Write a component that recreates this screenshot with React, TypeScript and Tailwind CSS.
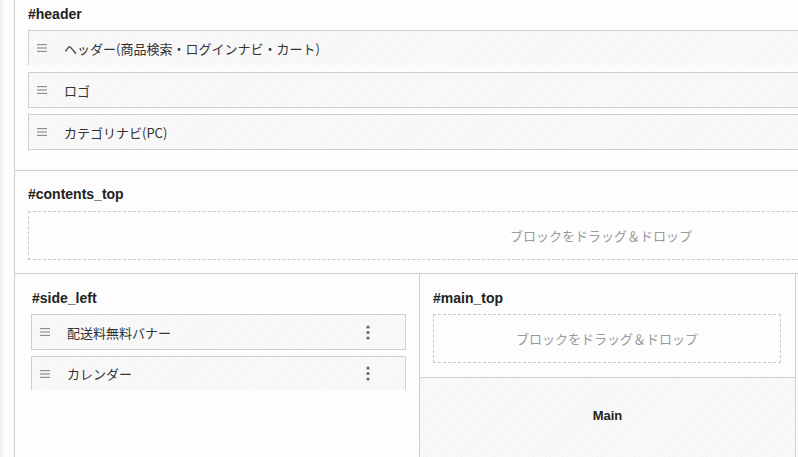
import React from "react";

const hatch =
  "bg-[repeating-linear-gradient(-45deg,#f9f9f9_0px,#f9f9f9_2px,#f5f5f5_2px,#f5f5f5_3px)]";

function Burger() {
  return (
    <svg width="10" height="8" viewBox="0 0 10 8" className="shrink-0">
      <rect x="0" y="0" width="10" height="1.2" fill="#8f8f8f" />
      <rect x="0" y="3.4" width="10" height="1.2" fill="#8f8f8f" />
      <rect x="0" y="6.8" width="10" height="1.2" fill="#8f8f8f" />
    </svg>
  );
}

function Kebab() {
  return (
    <svg width="4" height="15" viewBox="0 0 4 15" className="shrink-0">
      <circle cx="2" cy="2" r="1.6" fill="#5c6779" />
      <circle cx="2" cy="7.5" r="1.6" fill="#5c6779" />
      <circle cx="2" cy="13" r="1.6" fill="#5c6779" />
    </svg>
  );
}

const jp = "font-['Noto_Sans_CJK_JP','Noto_Sans',sans-serif]";
const lat = "font-['Liberation_Sans','Noto_Sans_CJK_JP',sans-serif]";

function Block({
  label,
  noBottom,
  kebab,
  h = "h-[36px]",
}: {
  label: string;
  noBottom?: boolean;
  kebab?: boolean;
  h?: string;
}) {
  return (
    <div
      className={`${h} flex items-center border border-[#cfcfcf] ${
        noBottom ? "border-b-0" : ""
      } ${hatch} pl-[8px]`}
    >
      <Burger />
      <span className={`ml-[17px] text-[13px] text-[#333] ${jp} leading-none`}>
        {label}
      </span>
      {kebab && (
        <div className="ml-auto mr-[35px]">
          <Kebab />
        </div>
      )}
    </div>
  );
}

function Title({ children }: { children: React.ReactNode }) {
  return (
    <div className={`${lat} text-[14px] font-bold leading-5 text-[#222]`}>
      {children}
    </div>
  );
}

function Drop({ h }: { h: string }) {
  return (
    <div
      className={`${h} flex items-center justify-center border border-dashed border-[#c8c8c8]`}
    >
      <span className={`${jp} text-[13px] text-[#9a9a9a]`}>
        ブロックをドラッグ＆ドロップ
      </span>
    </div>
  );
}

export default function App() {
  return (
    <div className="flex h-[457px] w-[798px] overflow-hidden bg-[#fcfdfc]">
      <div className="w-[3px] shrink-0 bg-[#eef0f2]" />
      <div className="w-[11px] shrink-0" />
      <div className="flex w-[1160px] shrink-0 flex-col border-l border-[#cfcfcf]">
        {/* header */}
        <div className="border-b border-[#cfcfcf] pb-[20px] pl-[13px] pt-[4px]">
          <Title>#header</Title>
          <div className="mt-[6px] flex flex-col gap-[6px]">
            <Block
              label="ヘッダー(商品検索・ログインナビ・カート)"
              noBottom
              h="h-[35px]"
            />
            <div className="mt-[1px]">
              <Block label="ロゴ" />
            </div>
            <Block label="カテゴリナビ(PC)" />
          </div>
        </div>
        {/* contents_top */}
        <div className="border-b border-[#cfcfcf] pb-[13px] pl-[13px] pt-[13px]">
          <Title>#contents_top</Title>
          <div className="mt-[7px]">
            <Drop h="h-[49px]" />
          </div>
        </div>
        {/* columns */}
        <div className="flex flex-1">
          <div className="w-[405px] shrink-0 border-r border-[#cfcfcf] pl-[16px] pr-[13px] pt-[14px]">
            <div className="pl-[1px]">
              <Title>#side_left</Title>
            </div>
            <div className="mt-[6px] flex flex-col gap-[6px]">
              <Block label="配送料無料バナー" kebab />
              <Block label="カレンダー" kebab noBottom h="h-[34px]" />
            </div>
          </div>
          <div className="flex w-[376px] shrink-0 flex-col border-r border-[#cfcfcf]">
            <div className="border-b border-[#cfcfcf] pb-[14px] pl-[13px] pr-[14px] pt-[14px]">
              <Title>#main_top</Title>
              <div className="mt-[6px]">
                <Drop h="h-[49px]" />
              </div>
            </div>
            <div className={`flex-1 ${hatch} flex justify-center pt-[28px]`}>
              <span className={`${lat} text-[13px] font-bold text-[#222]`}>
                Main
              </span>
            </div>
          </div>
          <div className="flex-1" />
        </div>
      </div>
    </div>
  );
}
